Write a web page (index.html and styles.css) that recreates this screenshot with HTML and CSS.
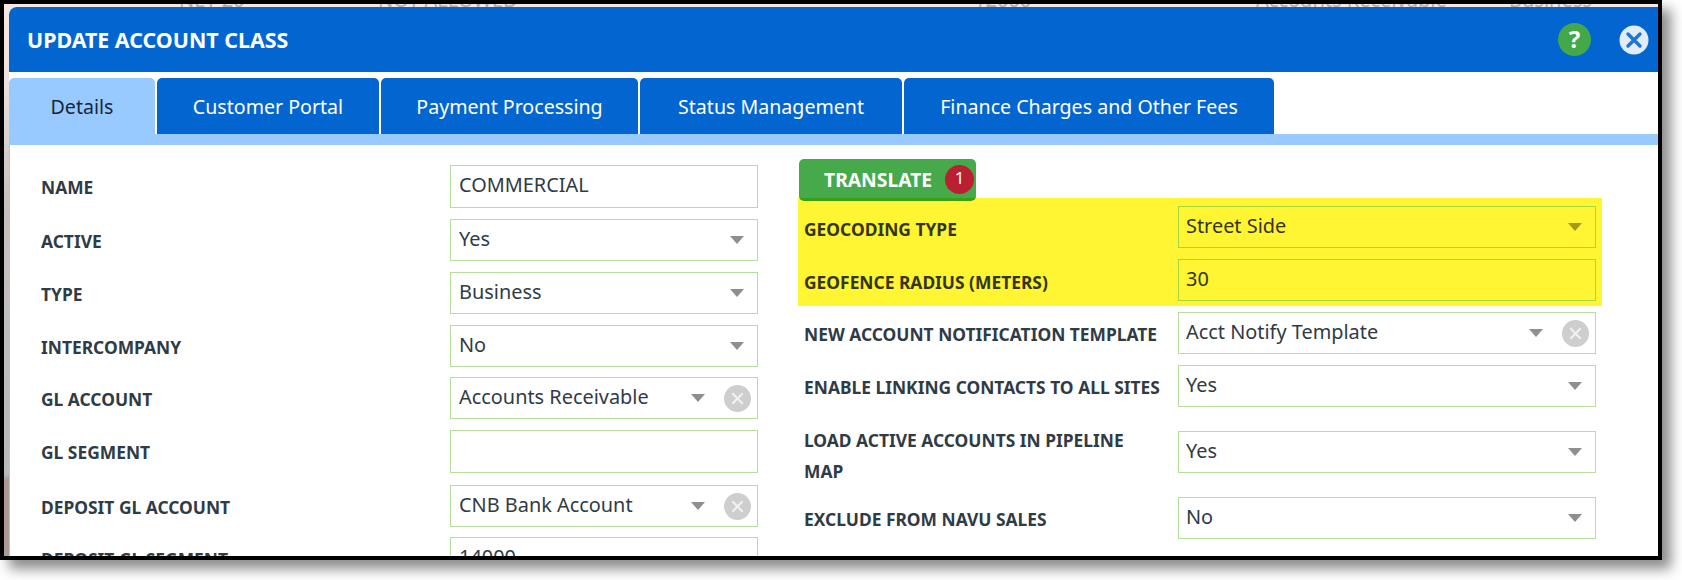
FILE: index.html
```html
<!DOCTYPE html>
<html lang="en">
<head>
<meta charset="utf-8">
<title>Update Account Class</title>
<link rel="stylesheet" href="styles.css">
</head>
<body>
<div class="shot">
  <div class="ghost">
    <span class="g1">NET 20</span><span class="g2">NOT ALLOWED</span><span class="g3">12000</span><span class="g4">Accounts Receivable</span><span class="g5">Business</span>
  </div>
  <div class="modal">
    <header class="head">
      <h1 class="title">UPDATE ACCOUNT CLASS</h1>
      <span class="help">?</span>
      <svg class="close" viewBox="0 0 30 30"><circle cx="15" cy="15" r="14.5" fill="#e0ecf9"/><path d="M9 9l12 12M21 9L9 21" stroke="#1f74d4" stroke-width="3.4" stroke-linecap="round"/></svg>
    </header>
    <nav class="tabs">
      <a class="tab active t1">Details</a>
      <a class="tab t2">Customer Portal</a>
      <a class="tab t3">Payment Processing</a>
      <a class="tab t4">Status Management</a>
      <a class="tab t5">Finance Charges and Other Fees</a>
    </nav>
    <div class="band"></div>
    <main class="body">
      <section class="left">
        <div class="row"><label>NAME</label><div class="field tall"><span class="val">COMMERCIAL</span></div></div>
        <div class="row"><label>ACTIVE</label><div class="field"><span class="val">Yes</span><i class="arrow"></i></div></div>
        <div class="row"><label>TYPE</label><div class="field"><span class="val">Business</span><i class="arrow"></i></div></div>
        <div class="row"><label>INTERCOMPANY</label><div class="field"><span class="val">No</span><i class="arrow"></i></div></div>
        <div class="row"><label>GL ACCOUNT</label><div class="field"><span class="val">Accounts Receivable</span><i class="arrow"></i><svg class="clear" viewBox="0 0 26 26"><circle cx="13" cy="13" r="13" fill="#cecece"/><path d="M8 8l10 10M18 8L8 18" stroke="#f2f2f2" stroke-width="2"/></svg></div></div>
        <div class="row"><label>GL SEGMENT</label><div class="field tall"></div></div>
        <div class="row"><label>DEPOSIT GL ACCOUNT</label><div class="field"><span class="val">CNB Bank Account</span><i class="arrow"></i><svg class="clear" viewBox="0 0 26 26"><circle cx="13" cy="13" r="13" fill="#cecece"/><path d="M8 8l10 10M18 8L8 18" stroke="#f2f2f2" stroke-width="2"/></svg></div></div>
        <div class="row"><label>DEPOSIT GL SEGMENT</label><div class="field"><span class="val">14000</span></div></div>
      </section>
      <section class="right">
        <button class="translate">TRANSLATE<span class="badge">1</span></button>
        <div class="hl">
          <div class="rrow"><label>GEOCODING TYPE</label><div class="field"><span class="val">Street Side</span><i class="arrow"></i></div></div>
          <div class="rrow"><label>GEOFENCE RADIUS (METERS)</label><div class="field"><span class="val">30</span></div></div>
        </div>
        <div class="rest">
          <div class="rrow"><label>NEW ACCOUNT NOTIFICATION TEMPLATE</label><div class="field"><span class="val">Acct Notify Template</span><i class="arrow"></i><svg class="clear" viewBox="0 0 26 26"><circle cx="13" cy="13" r="13" fill="#cecece"/><path d="M8 8l10 10M18 8L8 18" stroke="#f2f2f2" stroke-width="2"/></svg></div></div>
          <div class="rrow"><label>ENABLE LINKING CONTACTS TO ALL SITES</label><div class="field"><span class="val">Yes</span><i class="arrow"></i></div></div>
          <div class="rrow"><label class="two">LOAD ACTIVE ACCOUNTS IN PIPELINE MAP</label><div class="field"><span class="val">Yes</span><i class="arrow"></i></div></div>
          <div class="rrow"><label>EXCLUDE FROM NAVU SALES</label><div class="field"><span class="val">No</span><i class="arrow"></i></div></div>
        </div>
      </section>
    </main>
  </div>
</div>
</body>
</html>
```
FILE: styles.css
```css
* { box-sizing: border-box; }
html, body { margin: 0; height: 100%; overflow: hidden; background: #fff; }
body { font-family: "Noto Sans", "Open Sans", sans-serif; color: #2f3b45; }

.shot {
  width: 1662px;
  height: 560px;
  border: 4px solid #000;
  background: linear-gradient(180deg, #f6e8e3 0, #efe3df 70px, #c4c0be 200px, #b9b9b9 470px, #ab9a96 476px, #ab9a96 100%);
  padding-left: 5px;
  box-shadow: 9px 9px 12px rgba(0, 0, 0, .45);
  display: flex;
  flex-direction: column;
  overflow: hidden;
}

.ghost {
  height: 3px;
  flex: none;
  display: flex;
  align-items: flex-end;
  overflow: hidden;
  color: #adadad;
  font-size: 20px;
  line-height: 15px;
  white-space: nowrap;
}
.ghost span { flex: none; }
.g1 { margin-left: 170px; width: 59px; }
.g2 { margin-left: 140px; width: 136px; }
.g3 { margin-left: 460px; width: 56px; }
.g4 { margin-left: 226px; width: 184px; }
.g5 { margin-left: 69px; }

.modal {
  flex: 1;
  min-height: 0;
  background: #fff;
  border-radius: 8px 0 0 0;
  overflow: hidden;
}

.head {
  height: 65px;
  background: #0366d0;
  display: flex;
  align-items: center;
  padding: 0 9px 0 18px;
}
.title {
  margin: 0;
  flex: 1;
  font-size: 21.4px;
  font-weight: 700;
  color: #fff;
}
.help {
  width: 33px;
  height: 33px;
  border-radius: 50%;
  background: #43a84a;
  color: #fff;
  font-weight: 700;
  font-size: 24px;
  line-height: 32px;
  text-align: center;
  margin-right: 28px;
}
.close { width: 30px; height: 30px; display: block; }

.tabs {
  margin-top: 6px;
  height: 56px;
  display: flex;
  gap: 2px;
}
.tab {
  background: #0366d0;
  color: #fff;
  font-size: 19.6px;
  display: flex;
  align-items: center;
  justify-content: center;
  border-radius: 5px 5px 0 0;
}
.tab.active { background: #99caff; color: #17273a; }
.t1 { width: 146px; }
.t2 { width: 222px; }
.t3 { width: 257px; }
.t4 { width: 262px; }
.t5 { width: 370px; }

.band { height: 11px; background: #99caff; }

.body {
  display: flex;
  height: 420px;
  border-left: 1px solid #99caff;
}

label {
  font-size: 17.4px;
  font-weight: 700;
  line-height: 31px;
}

.left {
  width: 788px;
  flex: none;
  padding: 20px 0 0 31px;
  display: grid;
  grid-template-columns: 409px 308px;
  grid-template-rows: 54px 53px 53px 52px 53px 55px 52px 52px;
  align-content: start;
  overflow: hidden;
}
.row { display: contents; }
.row label { align-self: start; padding-top: 7px; }
.left .field { padding-left: 8px; }

.field {
  height: 42px;
  border: 1.5px solid #b5e09a;
  display: flex;
  align-items: center;
  padding: 0 7px 4px;
  font-size: 19.9px;
}
.field.tall { height: 43px; }
.val { flex: 1; }

.arrow {
  flex: none;
  width: 0;
  height: 0;
  border-left: 7.5px solid transparent;
  border-right: 7.5px solid transparent;
  border-top: 8px solid #8f8f8f;
  margin-top: 4px;
  margin-right: 6px;
}
.clear {
  flex: none;
  width: 27px;
  height: 27px;
  margin: 4px -1px 0 13px;
  display: block;
}

.right {
  width: 810px;
  padding-top: 14px;
}
.translate {
  display: flex;
  align-items: center;
  width: 177px;
  height: 42px;
  margin: 0 0 -3px 1px;
  padding: 2px 0 0 25px;
  border: 0;
  border-bottom: 3px solid #3aa012;
  border-radius: 5px;
  background: #46aa4b;
  color: #fff;
  font-family: inherit;
  font-size: 19.3px;
  font-weight: 700;
  position: relative;
  z-index: 1;
}
.badge {
  width: 29px;
  height: 29px;
  border-radius: 50%;
  background: #bb1f32;
  color: #fff;
  font-size: 17px;
  font-weight: 400;
  line-height: 26px;
  text-align: center;
  margin-left: 13px;
}

.hl {
  width: 804px;
  height: 108px;
  background: #fff533;
  padding: 8px 6px 0 6px;
  color: #33351c;
}
.hl .rrow { height: 53px; }
.hl .field { border-color: #a9d63c; color: #33351c; }
.hl .arrow { border-top-color: #a39a1a; }

.rrow {
  display: grid;
  grid-template-columns: 374px 418px;
}
.rrow label { align-self: start; padding-top: 7px; }
.hl .rrow label { padding-top: 8px; }
.rrow label.two { padding: 0 20px 0 0; margin-top: -6px; }

.rest {
  padding: 6px 6px 0 6px;
  display: grid;
  grid-template-rows: 53px 66px 66px 53px;
}
```
